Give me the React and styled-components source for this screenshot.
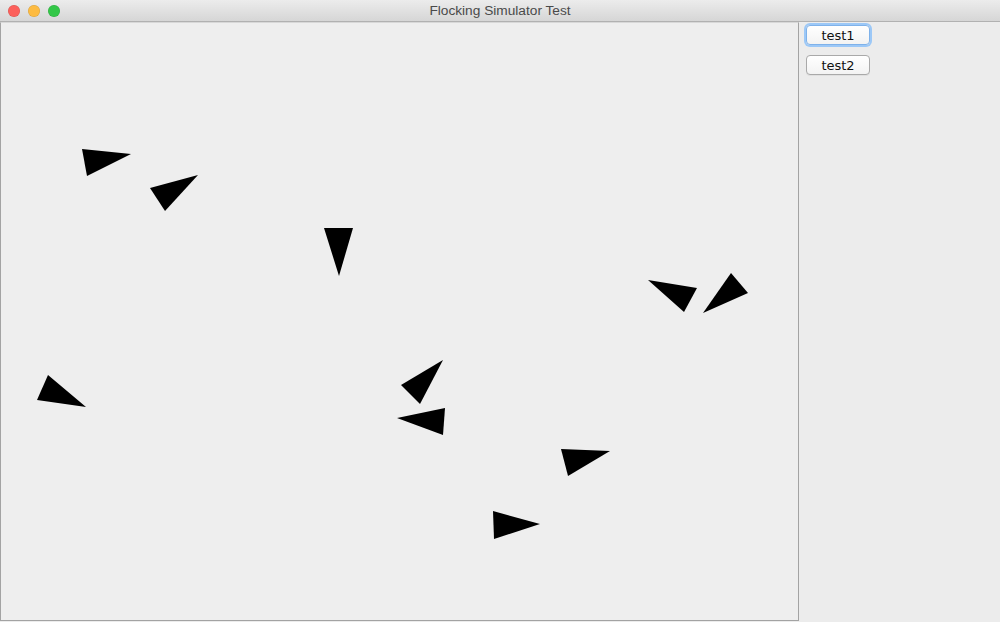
import React from "react";
import styled, { createGlobalStyle } from "styled-components";

const Global = createGlobalStyle`
  html, body { margin: 0; padding: 0; background: #ececec; }
  body { font-family: "Liberation Sans", "DejaVu Sans", sans-serif; }
`;

const Window = styled.div`
  width: 1000px;
  height: 622px;
  display: flex;
  flex-direction: column;
  background: #ececec;
  overflow: hidden;
`;

const TitleBar = styled.div`
  height: 21px;
  flex: 0 0 21px;
  position: relative;
  display: flex;
  align-items: center;
  justify-content: center;
  background: linear-gradient(#ececec, #d6d6d6);
  border-bottom: 1px solid #b1b1b1;
`;

const Lights = styled.div`
  position: absolute;
  left: 8px;
  top: 5px;
  display: flex;
  gap: 8px;
`;

const Light = styled.span`
  width: 12px;
  height: 12px;
  border-radius: 50%;
  background: ${(p) => p.$c};
  box-shadow: inset 0 0 0 0.5px rgba(0, 0, 0, 0.15);
`;

const Title = styled.div`
  font-size: 13.7px;
  color: #4a4a4a;
`;

const Body = styled.div`
  flex: 1;
  display: flex;
  flex-direction: row;
  align-items: flex-start;
`;

const Canvas = styled.div`
  width: 799px;
  height: 599px;
  box-sizing: border-box;
  border: 1px solid #a3a3a3;
  border-top-color: #d8d8d8;
  background: #eeeeee;
`;

const Side = styled.div`
  flex: 1;
  display: flex;
  flex-direction: column;
  align-items: flex-start;
  gap: 10px;
  padding: 3px 0 0 7px;
`;

const Button = styled.button`
  width: 64px;
  height: 20px;
  box-sizing: border-box;
  border: 1px solid #a9a9a9;
  border-radius: 4px;
  background: linear-gradient(#ffffff, #f3f3f3);
  font-family: "DejaVu Sans", "Liberation Sans", sans-serif;
  font-size: 13px;
  color: #111;
  padding: 0;
  box-shadow: ${(p) =>
    p.$focus ? "0 0 0 2px #9cc8f7" : "0 1px 0 rgba(0,0,0,0.05)"};
  border-color: ${(p) => (p.$focus ? "#7fb2ea" : "#a9a9a9")};
`;

const birds = [
  "82,149 131,154 87,176",
  "150,188 198,175 165,211",
  "324,228 353,228 339,276",
  "648,280 697,288 684,312",
  "731,273 748,293 703,313",
  "48,375 86,407 37,400",
  "443,360 420,404 401,385",
  "445,408 397,418 443,435",
  "561,449 610,451 568,476",
  "493,511 540,524 494,539",
];

export default function App() {
  return (
    <Window>
      <Global />
      <TitleBar>
        <Lights>
          <Light $c="#fc605b" />
          <Light $c="#fdbb41" />
          <Light $c="#33c748" />
        </Lights>
        <Title>Flocking Simulator Test</Title>
      </TitleBar>
      <Body>
        <Canvas>
          <svg width="797" height="597" viewBox="1 23 797 597" style={{ display: "block" }}>
            {birds.map((p, i) => (
              <polygon key={i} points={p} fill="#000" />
            ))}
          </svg>
        </Canvas>
        <Side>
          <Button $focus>test1</Button>
          <Button>test2</Button>
        </Side>
      </Body>
    </Window>
  );
}
